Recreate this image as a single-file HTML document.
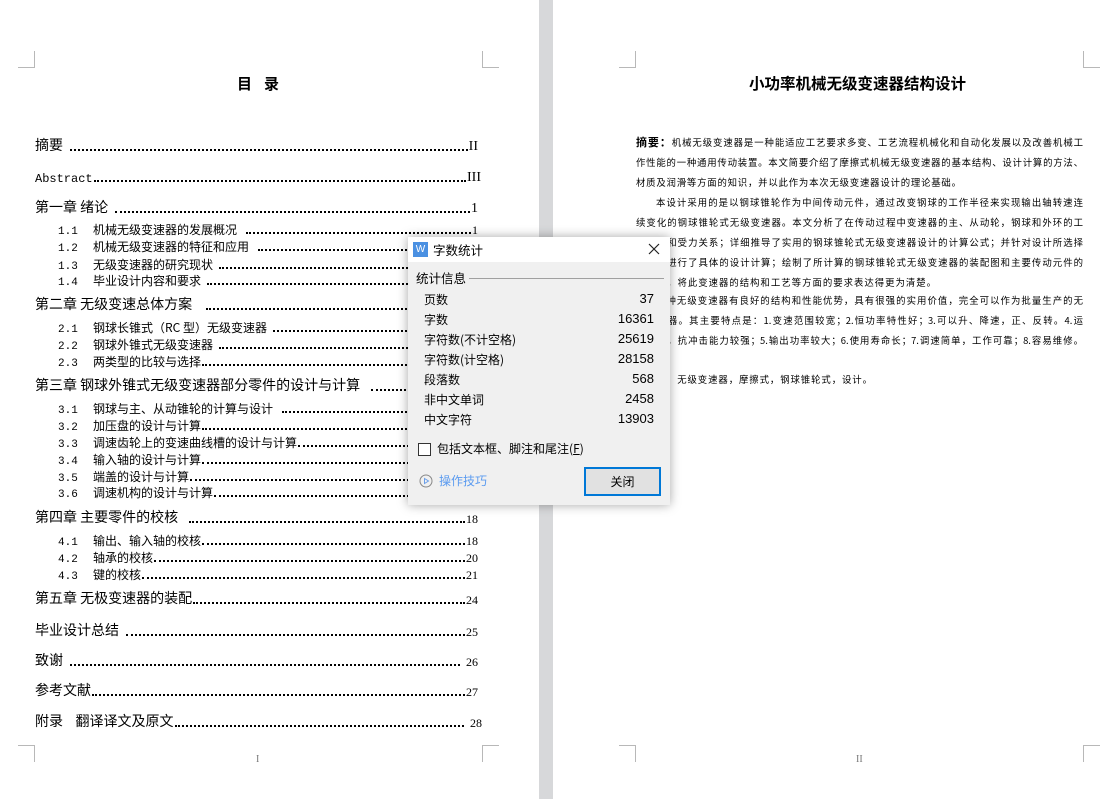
<!DOCTYPE html>
<html><head><meta charset="utf-8">
<style>
*{margin:0;padding:0;box-sizing:border-box}
body{width:1111px;height:799px;background:#fff;position:relative;overflow:hidden;font-family:"Liberation Sans","Noto Sans CJK SC",sans-serif;color:#000}
.lp{position:absolute;left:0;top:0;width:539px;height:799px}
.gap{position:absolute;left:539px;top:0;width:14px;height:799px;background:#d7d8da}
.cm{position:absolute;width:17px;height:17px;border-color:#b8b8b8;border-style:solid;border-width:0}
.e{position:absolute;display:flex;align-items:flex-end;white-space:nowrap;font-family:"Noto Sans CJK SC","WenQuanYi Zen Hei",sans-serif}
.e .l{flex:1;border-bottom:2px dotted #000;margin:0 1px 4px 1px;height:1px}
.e .n{font-family:"Liberation Serif",serif}
.ch{font-size:14px;left:35px;right:61px;height:20px}
.sb{font-size:12px;left:58px;right:61px;height:17px}
.sb .no{display:inline-block;width:35px;font-family:"Liberation Mono",monospace;font-size:11px}
.rp{position:absolute;left:636px;width:447px;font-size:9.4px;font-family:"Noto Sans CJK SC",sans-serif;text-align:justify;text-align-last:justify;white-space:nowrap;height:20px;line-height:20px;overflow:hidden}
.dlg{position:absolute;left:408px;top:237px;width:262px;height:268px;background:#f0f0f0;box-shadow:0 0 10px rgba(0,0,0,.35);font-family:"Noto Sans CJK SC",sans-serif;font-size:12px;z-index:5}
.tb{height:25px;background:#fff;position:relative}
.row{position:absolute;left:16px;width:230px;display:flex;justify-content:space-between;font-size:12px}
.row span:last-child{font-family:"Liberation Sans",sans-serif;font-size:13px}
</style></head><body>
<div class="gap"></div>
<div class="cm" style="left:18px;top:51px;border-right-width:1px;border-bottom-width:1px"></div>
<div class="cm" style="left:482px;top:51px;border-left-width:1px;border-bottom-width:1px"></div>
<div class="cm" style="left:18px;top:745px;border-right-width:1px;border-top-width:1px"></div>
<div class="cm" style="left:482px;top:745px;border-left-width:1px;border-top-width:1px"></div>
<div class="cm" style="left:619px;top:51px;border-right-width:1px;border-bottom-width:1px"></div>
<div class="cm" style="left:1083px;top:51px;border-left-width:1px;border-bottom-width:1px"></div>
<div class="cm" style="left:619px;top:745px;border-right-width:1px;border-top-width:1px"></div>
<div class="cm" style="left:1083px;top:745px;border-left-width:1px;border-top-width:1px"></div>

<div style="position:absolute;left:237px;top:73px;font-size:15px;font-weight:bold;font-family:'Noto Sans CJK SC',sans-serif;letter-spacing:12px">目录</div>

<div class="lp">
<div class="e ch" style="top:135px"><span>摘要&nbsp;&nbsp;</span><span class="l"></span><span class="n">II</span></div>
<div class="e ch" style="top:166px;right:58px"><span style="font-family:'Liberation Mono',monospace;font-size:12px">Abstract</span><span class="l"></span><span class="n">III</span></div>
<div class="e ch" style="top:197px"><span>第一章 绪论&nbsp;&nbsp;</span><span class="l"></span><span class="n">1</span></div>
<div class="e sb" style="top:221px"><span class="no">1.1</span><span>机械无级变速器的发展概况&nbsp;&nbsp;&nbsp;</span><span class="l"></span><span class="n">1</span></div>
<div class="e sb" style="top:238px"><span class="no">1.2</span><span>机械无级变速器的特征和应用&nbsp;&nbsp;&nbsp;</span><span class="l"></span><span class="n">1</span></div>
<div class="e sb" style="top:256px"><span class="no">1.3</span><span>无级变速器的研究现状&nbsp;&nbsp;</span><span class="l"></span><span class="n">1</span></div>
<div class="e sb" style="top:272px"><span class="no">1.4</span><span>毕业设计内容和要求&nbsp;&nbsp;</span><span class="l"></span><span class="n">1</span></div>
<div class="e ch" style="top:294px"><span>第二章 无级变速总体方案&nbsp;&nbsp;&nbsp;&nbsp;</span><span class="l"></span><span class="n">2</span></div>
<div class="e sb" style="top:319px"><span class="no">2.1</span><span>钢球长锥式（RC 型）无级变速器&nbsp;&nbsp;</span><span class="l"></span><span class="n">2</span></div>
<div class="e sb" style="top:336px"><span class="no">2.2</span><span>钢球外锥式无级变速器&nbsp;&nbsp;</span><span class="l"></span><span class="n">2</span></div>
<div class="e sb" style="top:353px"><span class="no">2.3</span><span>两类型的比较与选择</span><span class="l"></span><span class="n">3</span></div>
<div class="e ch" style="top:375px"><span>第三章 钢球外锥式无级变速器部分零件的设计与计算&nbsp;&nbsp;&nbsp;</span><span class="l"></span><span class="n">4</span></div>
<div class="e sb" style="top:400px"><span class="no">3.1</span><span>钢球与主、从动锥轮的计算与设计&nbsp;&nbsp;&nbsp;</span><span class="l"></span><span class="n">4</span></div>
<div class="e sb" style="top:417px"><span class="no">3.2</span><span>加压盘的设计与计算</span><span class="l"></span><span class="n">9</span></div>
<div class="e sb" style="top:434px"><span class="no">3.3</span><span>调速齿轮上的变速曲线槽的设计与计算</span><span class="l"></span><span class="n">10</span></div>
<div class="e sb" style="top:451px"><span class="no">3.4</span><span>输入轴的设计与计算</span><span class="l"></span><span class="n">12</span></div>
<div class="e sb" style="top:468px"><span class="no">3.5</span><span>端盖的设计与计算</span><span class="l"></span><span class="n">15</span></div>
<div class="e sb" style="top:484px"><span class="no">3.6</span><span>调速机构的设计与计算</span><span class="l"></span><span class="n">16</span></div>
<div class="e ch" style="top:507px"><span>第四章 主要零件的校核&nbsp;&nbsp;&nbsp;</span><span class="l"></span><span class="n" style="font-size:12px">18</span></div>
<div class="e sb" style="top:532px"><span class="no">4.1</span><span>输出、输入轴的校核</span><span class="l"></span><span class="n">18</span></div>
<div class="e sb" style="top:549px"><span class="no">4.2</span><span>轴承的校核</span><span class="l"></span><span class="n">20</span></div>
<div class="e sb" style="top:566px"><span class="no">4.3</span><span>键的校核</span><span class="l"></span><span class="n">21</span></div>
<div class="e ch" style="top:588px"><span>第五章 无极变速器的装配</span><span class="l"></span><span class="n" style="font-size:12px">24</span></div>
<div class="e ch" style="top:620px"><span>毕业设计总结&nbsp;&nbsp;</span><span class="l"></span><span class="n" style="font-size:12px">25</span></div>
<div class="e ch" style="top:650px"><span>致谢&nbsp;&nbsp;</span><span class="l" style="margin-right:6px"></span><span class="n" style="font-size:12px">26</span></div>
<div class="e ch" style="top:680px"><span>参考文献</span><span class="l"></span><span class="n" style="font-size:12px">27</span></div>
<div class="e ch" style="top:711px;right:57px"><span>附录&nbsp;&nbsp;&nbsp;&nbsp;翻译译文及原文</span><span class="l" style="margin-right:6px"></span><span class="n" style="font-size:12px">28</span></div>
</div>
<div style="position:absolute;left:256px;top:754px;font-size:10px;color:#777;font-family:'Liberation Serif',serif">I</div>

<div style="position:absolute;left:749px;top:72px;font-size:15.5px;font-weight:bold;font-family:'Noto Sans CJK SC',sans-serif">小功率机械无级变速器结构设计</div>
<div class="rp" style="top:132px"><b style="font-size:11px">摘要：</b>机械无级变速器是一种能适应工艺要求多变、工艺流程机械化和自动化发展以及改善机械工</div>
<div class="rp" style="top:152px">作性能的一种通用传动装置。本文简要介绍了摩擦式机械无级变速器的基本结构、设计计算的方法、</div>
<div class="rp" style="top:172px;width:325px">材质及润滑等方面的知识，并以此作为本次无级变速器设计的理论基础。</div>
<div class="rp" style="top:192px;left:656px;width:427px">本设计采用的是以钢球锥轮作为中间传动元件，通过改变钢球的工作半径来实现输出轴转速连</div>
<div class="rp" style="top:212px">续变化的钢球锥轮式无级变速器。本文分析了在传动过程中变速器的主、从动轮，钢球和外环的工</div>
<div class="rp" style="top:232px">作原理和受力关系；详细推导了实用的钢球锥轮式无级变速器设计的计算公式；并针对设计所选择</div>
<div class="rp" style="top:252px">的方案进行了具体的设计计算；绘制了所计算的钢球锥轮式无级变速器的装配图和主要传动元件的</div>
<div class="rp" style="top:272px;width:300px">零件图，将此变速器的结构和工艺等方面的要求表达得更为清楚。</div>
<div class="rp" style="top:290px;left:656px;width:427px">这种无级变速器有良好的结构和性能优势，具有很强的实用价值，完全可以作为批量生产的无</div>
<div class="rp" style="top:310px">级变速器。其主要特点是：1.变速范围较宽；2.恒功率特性好；3.可以升、降速，正、反转。4.运</div>
<div class="rp" style="top:330px">转平稳，抗冲击能力较强；5.输出功率较大；6.使用寿命长；7.调速简单，工作可靠；8.容易维修。</div>
<div class="rp" style="top:369px;width:236px">关键词：无级变速器，摩擦式，钢球锥轮式，设计。</div>
<div style="position:absolute;left:856px;top:754px;font-size:10px;color:#777;font-family:'Liberation Serif',serif">II</div>

<div class="dlg">
  <div class="tb">
    <div style="position:absolute;left:5px;top:5px;width:15px;height:15px;background:#4a90e2;color:#fff;font-size:10px;line-height:15px;text-align:center;font-family:'Liberation Sans',sans-serif">W</div>
    <div style="position:absolute;left:25px;top:3px;font-size:12.5px">字数统计</div>
    <svg style="position:absolute;left:240px;top:6px" width="12" height="12" viewBox="0 0 12 12"><path d="M1 1L11 11M11 1L1 11" stroke="#222" stroke-width="1.2"/></svg>
  </div>
  <div style="position:absolute;left:8px;top:31px;font-size:12.5px">统计信息</div>
  <div style="position:absolute;left:61px;top:41px;width:195px;height:1px;background:#a0a0a0"></div>
  <div class="row" style="top:54px"><span>页数</span><span>37</span></div>
  <div class="row" style="top:74px"><span>字数</span><span>16361</span></div>
  <div class="row" style="top:94px"><span>字符数(不计空格)</span><span>25619</span></div>
  <div class="row" style="top:114px"><span>字符数(计空格)</span><span>28158</span></div>
  <div class="row" style="top:134px"><span>段落数</span><span>568</span></div>
  <div class="row" style="top:154px"><span>非中文单词</span><span>2458</span></div>
  <div class="row" style="top:174px"><span>中文字符</span><span>13903</span></div>
  <div style="position:absolute;left:10px;top:206px;width:13px;height:13px;border:1px solid #333;background:#fff"></div>
  <div style="position:absolute;left:29px;top:203px;font-size:12px">包括文本框、脚注和尾注(<u>F</u>)</div>
  <svg style="position:absolute;left:11px;top:237px" width="14" height="14" viewBox="0 0 14 14"><circle cx="7" cy="7" r="6" fill="none" stroke="#888" stroke-width="1"/><path d="M5.5 4.5L9.5 7L5.5 9.5Z" fill="none" stroke="#6a9ee8" stroke-width="1"/></svg>
  <div style="position:absolute;left:31px;top:235px;font-size:12px;color:#5b9bf0">操作技巧</div>
  <div style="position:absolute;left:176px;top:230px;width:77px;height:29px;border:2px solid #0078d7;background:#e1e1e1;text-align:center;line-height:25px;font-size:12px">关闭</div>
</div>
</body></html>
